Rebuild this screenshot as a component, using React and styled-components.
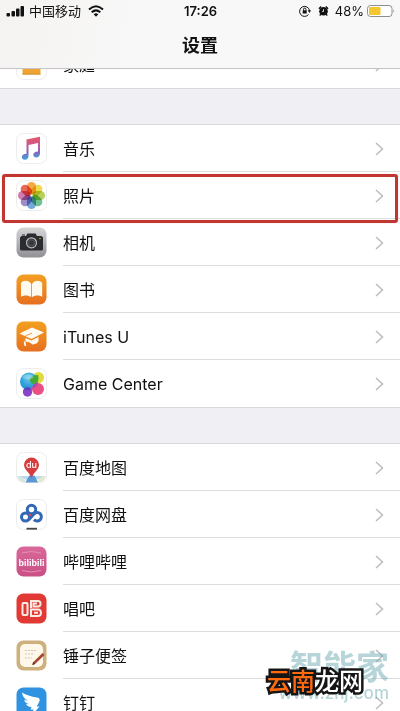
import React from 'react'
import styled, { createGlobalStyle } from 'styled-components'

const GlobalStyle = createGlobalStyle`
  * {
    box-sizing: border-box;
  }

  body {
    margin: 0;
    background: #fff;
    color: #111;
    font-family: Inter, 'Noto Sans CJK SC', sans-serif;
  }
`

const Screen = styled.div`
  position: relative;
  height: 100vh;
  overflow: hidden;
`

const Header = styled.header`
  position: relative;
  z-index: 1;
  background: linear-gradient(100deg, #f5f3f1, #f8f8f8 35%);
  border-bottom: 1px solid #c4c4c6;
`

const StatusBar = styled.div`
  display: grid;
  grid-template-columns: 1fr auto 1fr;
  align-items: center;
  height: 22px;
  padding: 0 5px 0 6px;
  font-size: 13px;
  line-height: 22px;
`

const StatusSide = styled.div`
  display: flex;
  align-items: center;
  justify-content: ${(props) => (props.$end ? 'flex-end' : 'flex-start')};
  gap: ${(props) => (props.$end ? '3px' : '4px')};
`

const StatusIcon = styled.svg`
  flex: none;
  margin-left: ${(props) => props.$before || '0'};
  margin-right: ${(props) => props.$after || '0'};
`

const Clock = styled.time`
  font-weight: 600;
`

const Title = styled.h1`
  margin: 0;
  height: 46px;
  font-size: 18px;
  font-weight: 700;
  line-height: 48px;
  text-align: center;
`

const Group = styled.ul`
  margin: 0;
  padding: 0;
  list-style: none;
  background: #fff;
  margin-top: ${(props) => (props.$scrolled ? '-28px' : '0')};
`

const Gap = styled.div`
  height: 37px;
  background: #efeff4;
  border: 1px solid #d9d9dd;
  border-width: 1px 0;
`

const Item = styled.li`
  position: relative;
`

const RowLink = styled.a`
  display: flex;
  align-items: center;
  gap: 16px;
  height: 47px;
  padding-left: 16px;
  color: inherit;
  text-decoration: none;
`

const RowBody = styled.span`
  display: flex;
  flex: 1;
  align-items: center;
  justify-content: space-between;
  height: 47px;
  padding: 1px 16px 0 0;
  border-bottom: 1px solid ${(props) => (props.$last ? 'transparent' : '#dddddf')};
`

const Label = styled.span`
  font-size: 16px;
  line-height: 24px;
`

const Highlight = styled.div`
  position: absolute;
  inset: 2px 2px -4px;
  z-index: 1;
  border: 3px solid #c23631;
  border-radius: 3px;
  box-shadow: 0 0 1px #f3a5a0;
  pointer-events: none;
`

const Watermark = styled.div`
  position: absolute;
  right: 11px;
  bottom: 9px;
  color: rgba(112, 172, 180, 0.5);
  text-align: right;
  pointer-events: none;
`

const WatermarkName = styled.div`
  font-size: 33px;
  font-weight: 700;
  line-height: 34px;
`

const WatermarkSite = styled.div`
  font-size: 17px;
  font-weight: 500;
  line-height: 18px;
`

const Stamp = styled.div`
  position: absolute;
  right: 37px;
  bottom: 15px;
  color: #fff;
  font-size: 24px;
  font-weight: 500;
  line-height: 28px;
  paint-order: stroke fill;
  -webkit-text-stroke: 5px #151515;
  pointer-events: none;
`

const StampAccent = styled.span`
  color: #ff6a10;
`

const AppIcon = styled.svg`
  flex: none;
  width: 31px;
  height: 31px;
`

const Petals = styled.g`
  isolation: isolate;

  rect {
    mix-blend-mode: multiply;
  }
`

const Tile = ({ fill = '#fff', stroke = 'none' }) => (
  <rect x="0.5" y="0.5" width="30" height="30" rx="7" fill={fill} stroke={stroke} />
)

const PlainTile = () => <Tile stroke="#ececec" />

const HomeIcon = () => (
  <AppIcon viewBox="0 0 31 31" aria-hidden="true">
    <PlainTile />
    <path d="M15.5 5L3 15h3.5v10.500h18V15H28z" fill="#f0a431" />
    <path d="M6.500 25h18" stroke="#d98f2b" />
  </AppIcon>
)

const MusicIcon = () => (
  <AppIcon viewBox="0 0 31 31" aria-hidden="true">
    <defs>
      <linearGradient id="music" x1="0" y1="0" x2="0" y2="1">
        <stop offset="0" stopColor="#ea5568" />
        <stop offset="0.35" stopColor="#c9598b" />
        <stop offset="0.65" stopColor="#8b62bd" />
        <stop offset="1" stopColor="#3aa5dc" />
      </linearGradient>
    </defs>
    <PlainTile />
    <path
      d="M10.500 6.500L24 3.800v16.700c0 2.400-1.500 3.900-3.700 3.900-1.800 0-3-1-3-2.600 0-2 1.700-3 4.700-3.300V10l-9.500 2v11c0 2.300-1.500 3.700-3.700 3.700-1.800 0-3-1-3-2.600 0-2 1.700-3 4.700-3.300z"
      fill="url(#music)"
    />
  </AppIcon>
)

const petals = ['#f29a24', '#ecd32c', '#a9c93c', '#58b57c', '#5b9bd3', '#8b79bd', '#c965a0', '#e84f3d']

const PhotosIcon = () => (
  <AppIcon viewBox="0 0 31 31" aria-hidden="true">
    <PlainTile />
    <Petals>
      {petals.map((color, i) => (
        <rect
          key={color}
          x="11"
          y="2"
          width="9"
          height="12.500"
          rx="4.500"
          fill={color}
          fillOpacity="0.850"
          transform={`rotate(${i * 45} 15.500 15.500)`}
        />
      ))}
    </Petals>
  </AppIcon>
)

const CameraIcon = () => (
  <AppIcon viewBox="0 0 31 31" aria-hidden="true">
    <defs>
      <linearGradient id="camera" x1="0" y1="0" x2="0" y2="1">
        <stop offset="0" stopColor="#d6d5d8" />
        <stop offset="1" stopColor="#909095" />
      </linearGradient>
    </defs>
    <Tile fill="url(#camera)" />
    <path d="M6 7.500h3v1H6zM5.500 9H10l1.500-2.500h8L21 9h4.500l1.500 1.500V22q0 1.500-1.500 1.500h-20Q4 23.500 4 22V10.500z" fill="#2b2c30" />
    <circle cx="15.500" cy="15.800" r="5" fill="#34363a" stroke="#bcbcbc" strokeWidth="1.200" />
    <circle cx="15.500" cy="15.800" r="3" fill="none" stroke="#55575b" />
    <circle cx="24" cy="11.500" r="0.800" fill="#d8a13d" />
  </AppIcon>
)

const OrangeFill = ({ id }) => (
  <defs>
    <linearGradient id={id} x1="0" y1="0" x2="0" y2="1">
      <stop offset="0" stopColor="#f2a021" />
      <stop offset="1" stopColor="#e76f20" />
    </linearGradient>
  </defs>
)

const BooksIcon = () => (
  <AppIcon viewBox="0 0 31 31" aria-hidden="true">
    <OrangeFill id="books" />
    <Tile fill="url(#books)" />
    <path
      d="M15.200 10c-1.400-2.300-3.300-3.200-5.500-3.200-2 0-3.600.8-4.700 2.400v13.600c2.900-1.800 7.300-2 10.200.2zM16 10c1.400-2.300 3.300-3.200 5.500-3.200 2 0 3.600.8 4.700 2.400v13.600c-2.900-1.800-7.300-2-10.200.2z"
      fill="#fffaf0"
    />
  </AppIcon>
)

const ItunesUIcon = () => (
  <AppIcon viewBox="0 0 31 31" aria-hidden="true">
    <OrangeFill id="itunes" />
    <Tile fill="url(#itunes)" />
    <path d="M3.500 12.500l12.500-6 12 5-12.500 6.500z" fill="#fffaf0" />
    <path d="M9.500 17l6 2.500 7-3.500v4q-1 3-6 3.500-2-2.500-7-3z" fill="#fffaf0" />
    <path d="M16 12.200l-6 2.300-1.500 3.500v3" fill="none" stroke="#e8902f" strokeWidth="0.900" />
    <path d="M7.700 20.500h1.800l.7 4.500H8.500z" fill="#fffaf0" />
  </AppIcon>
)

const GameCenterIcon = () => (
  <AppIcon viewBox="0 0 31 31" aria-hidden="true">
    <defs>
      <radialGradient id="gcBlue" cy="0.300">
        <stop offset="0" stopColor="#6ccbe8" />
        <stop offset="1" stopColor="#289bd8" />
      </radialGradient>
    </defs>
    <PlainTile />
    <circle cx="22.500" cy="9.500" r="5.500" fill="#dedb3b" />
    <circle cx="13" cy="13.500" r="9" fill="url(#gcBlue)" />
    <path d="M22 7a9 9 0 0 1-2.500 9.500q-6-.5-5.500-5.500 2-4 8-4z" fill="#47a83b" />
    <circle cx="22" cy="21" r="6" fill="#ec4f83" />
    <path d="M16.500 18.500a6 6 0 0 1 5.200-3.500q-.6 3.500-5.200 6z" fill="#a84baf" />
    <circle cx="11.500" cy="24" r="4.700" fill="#8b43cb" />
    <path d="M7.500 21.600a4.700 4.700 0 0 1 7.800-.3q-3.500 2-7.800.3z" fill="#5b45b8" />
    <ellipse cx="12" cy="9" rx="5.500" ry="2.500" fill="#fff" opacity="0.250" />
  </AppIcon>
)

const BaiduMapIcon = () => (
  <AppIcon viewBox="0 0 31 31" aria-hidden="true">
    <PlainTile />
    <path d="M1 24h5l4 6H6q-3-1-5-6z" fill="#d5e7dd" />
    <path d="M30 24h-5l-4 6h4q3-1 5-6z" fill="#e1e8cc" />
    <path d="M4 24h7l2 2-3 2zM27 24h-7l-2 2 3 2z" fill="#b9d9ee" />
    <path d="M13 23.500h5.500l3.500 7H9.500z" fill="#5b98d3" />
    <path d="M15.500 26q-1.500-4-4.800-7.200Q8 16 8 13a7.500 7.500 0 0 1 15 0q0 3-2.700 5.800Q17 22 15.500 26z" fill="#d63b3d" />
    <text x="15.500" y="16" fill="#fff" fontSize="9" fontWeight="500" textAnchor="middle">du</text>
  </AppIcon>
)

const BaiduDiskIcon = () => (
  <AppIcon viewBox="0 0 31 31" aria-hidden="true">
    <PlainTile />
    <g fill="none" stroke="#3268b5" strokeWidth="3">
      <circle cx="15.500" cy="10.500" r="4.200" />
      <circle cx="9.500" cy="18" r="4" />
      <path d="M12.500 21l5.500-6a4.200 4.200 0 1 1 0 5.500" />
    </g>
    <circle cx="14" cy="16" r="1.300" fill="#d24a59" />
    <path d="M10.500 29.700h10.500" stroke="#444" strokeWidth="1.800" />
  </AppIcon>
)

const BilibiliText = styled.text`
  font-family: 'Liberation Sans', Inter, sans-serif;
  font-size: 9px;
  font-weight: 700;
`

const BilibiliIcon = () => (
  <AppIcon viewBox="0 0 31 31" aria-hidden="true">
    <defs>
      <linearGradient id="bili" x1="0" y1="0" x2="0" y2="1">
        <stop offset="0" stopColor="#d9689b" />
        <stop offset="1" stopColor="#c94f84" />
      </linearGradient>
    </defs>
    <Tile fill="url(#bili)" />
    <path d="M6 7q9-3 19 0M6 24.500q9 3 19 0" fill="none" stroke="#e58eb2" strokeWidth="1" />
    <BilibiliText x="15.500" y="20" fill="#fff" textAnchor="middle">bilibili</BilibiliText>
  </AppIcon>
)

const ChangbaIcon = () => (
  <AppIcon viewBox="0 0 31 31" aria-hidden="true">
    <Tile fill="#e13a35" />
    <g fill="none" stroke="#fbe9e4" strokeWidth="2">
      <rect x="6.500" y="10" width="5" height="12" rx="1" />
      <path d="M14 8h8q2.500 0 2.500 2.700T22 13.500h-4.500v-3H21M15 8v7" />
      <path d="M22 16.500h-7V23h7q3 0 3-3.200t-3-3.300M18 19.700h4" />
    </g>
  </AppIcon>
)

const NotesIcon = () => (
  <AppIcon viewBox="0 0 31 31" aria-hidden="true">
    <Tile fill="#cdb07c" />
    <rect x="4" y="4" width="23" height="23" rx="5" fill="#fdf8e9" />
    <path d="M9 10.500h12M9 14h9M9 18h7" stroke="#cfc8b8" strokeDasharray="2 1" />
    <path d="M26.500 13l2 2-9.500 9-2.600 1 .8-2.800z" fill="#a8452f" />
    <path d="M16.300 25l.9-2.800 1.800 1.800z" fill="#333" />
  </AppIcon>
)

const DingTalkIcon = () => (
  <AppIcon viewBox="0 0 31 31" aria-hidden="true">
    <Tile fill="#2f93e2" />
    <path
      d="M6 5.500q6 3.500 15 5 3.500.7 2.500 3.500-1 2.800-3 5.500h3L16 28l1.500-5.500h-3l1-2.500q-4 0-5.500-3l3.500.2q-4.500-1-5.500-4.500l4 1.300Q6.500 11 6 5.500z"
      fill="#fff"
    />
  </AppIcon>
)

const Chevron = () => (
  <svg width="9" height="14" viewBox="0 0 9 14" fill="none" stroke="#bcbcc0" strokeWidth="1.500" aria-hidden="true">
    <path d="M1 1l6.500 6L1 13" />
  </svg>
)

const SignalIcon = () => (
  <StatusIcon width="19" height="12" viewBox="0 0 19 12" fill="#111" aria-hidden="true">
    <rect x="0.500" y="8" width="3.500" height="3.500" rx="1" />
    <rect x="5.500" y="6" width="3.500" height="5.500" rx="1" />
    <rect x="10" y="3.500" width="3.500" height="8" rx="1" />
    <rect x="14.500" y="1" width="3.500" height="10.500" rx="1" />
  </StatusIcon>
)

const WifiIcon = () => (
  <StatusIcon $before="3px" width="16" height="12" viewBox="0 0 16 12" aria-hidden="true">
    <g fill="none" stroke="#111" strokeWidth="2">
      <path d="M1 4.500q7-6.500 14 0" />
      <path d="M3.700 7.300q4.300-3.900 8.600 0" />
    </g>
    <path d="M5.700 9.200q2.300-1.900 4.600 0L8 11.700z" fill="#111" />
  </StatusIcon>
)

const RotationLockIcon = () => (
  <StatusIcon $after="4px" width="12" height="12" viewBox="0 0 12 12" aria-hidden="true">
    <path d="M9.500 9.500A5 5 0 1 1 10.500 5.500" fill="none" stroke="#111" />
    <path d="M8.700 5.200h3.300L10.500 8z" fill="#111" />
    <rect x="3.700" y="5.300" width="4" height="3.200" fill="#111" />
    <path d="M4.500 5.500V4.300a1.200 1.200 0 0 1 2.400 0v1.200" fill="none" stroke="#111" />
  </StatusIcon>
)

const AlarmIcon = () => (
  <StatusIcon $after="3px" width="11" height="12" viewBox="0 0 12 12" aria-hidden="true">
    <path d="M1 3.500L3.500 1M11 3.500L8.500 1M3 9.500l-1 1.500M9 9.500l1 1.500" stroke="#111" strokeWidth="1.500" />
    <circle cx="6" cy="6.300" r="4.700" fill="#111" />
    <path d="M6 4v2.500H4.500" fill="none" stroke="#fff" strokeWidth="0.900" />
  </StatusIcon>
)

const BatteryIcon = () => (
  <StatusIcon width="28" height="12" viewBox="0 0 28 12" aria-hidden="true">
    <rect x="0.500" y="0.500" width="24.500" height="11" rx="3" fill="#fff" stroke="#8e8e8e" />
    <rect x="2" y="2" width="11.500" height="8" rx="1" fill="#f4c62f" />
    <path d="M26.500 4.200q1.500 1.800 0 3.600z" fill="#777" />
  </StatusIcon>
)

const systemApps = [
  { name: '音乐', Icon: MusicIcon },
  { name: '照片', Icon: PhotosIcon, highlighted: true },
  { name: '相机', Icon: CameraIcon },
  { name: '图书', Icon: BooksIcon },
  { name: 'iTunes U', Icon: ItunesUIcon },
  { name: 'Game Center', Icon: GameCenterIcon },
]

const installedApps = [
  { name: '百度地图', Icon: BaiduMapIcon },
  { name: '百度网盘', Icon: BaiduDiskIcon },
  { name: '哔哩哔哩', Icon: BilibiliIcon },
  { name: '唱吧', Icon: ChangbaIcon },
  { name: '锤子便签', Icon: NotesIcon },
  { name: '钉钉', Icon: DingTalkIcon },
]

const SettingsGroup = ({ items, scrolled }) => (
  <Group $scrolled={scrolled}>
    {items.map(({ name, Icon, highlighted }, i) => (
      <Item key={name}>
        <RowLink href="#">
          <Icon />
          <RowBody $last={i === items.length - 1}>
            <Label>{name}</Label>
            <Chevron />
          </RowBody>
        </RowLink>
        {highlighted && <Highlight />}
      </Item>
    ))}
  </Group>
)

export const App = () => {
  return (
    <Screen lang="zh-CN">
      <GlobalStyle />
      <Header>
        <StatusBar>
          <StatusSide>
            <SignalIcon />
            <span>中国移动</span>
            <WifiIcon />
          </StatusSide>
          <Clock>17:26</Clock>
          <StatusSide $end>
            <RotationLockIcon />
            <AlarmIcon />
            <span>48%</span>
            <BatteryIcon />
          </StatusSide>
        </StatusBar>
        <Title>设置</Title>
      </Header>
      <main>
        <SettingsGroup items={[{ name: '家庭', Icon: HomeIcon }]} scrolled />
        <Gap />
        <SettingsGroup items={systemApps} />
        <Gap />
        <SettingsGroup items={installedApps} />
      </main>
      <Watermark>
        <WatermarkName>智能家</WatermarkName>
        <WatermarkSite>www.znj.com</WatermarkSite>
      </Watermark>
      <Stamp>
        <StampAccent>云南</StampAccent>龙网
      </Stamp>
    </Screen>
  )
}

export default App
